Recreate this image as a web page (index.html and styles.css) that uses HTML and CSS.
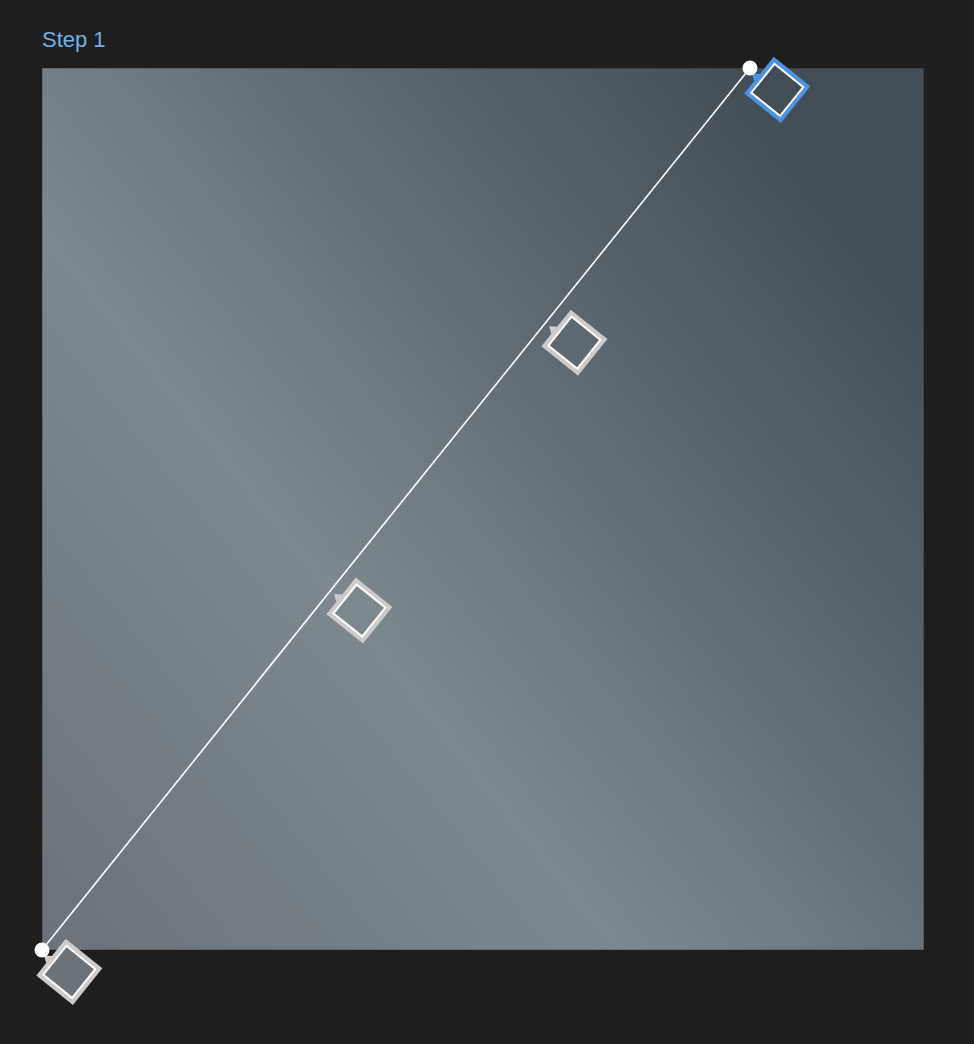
FILE: index.html
```html
<!DOCTYPE html>
<html lang="en">
<head>
<meta charset="utf-8">
<title>Gradient editor</title>
<link rel="stylesheet" href="styles.css">
</head>
<body>
  <main class="editor">
    <h1 class="step-label">Step 1</h1>
    <div class="canvas">
      <svg class="canvas-svg" width="882" height="882" viewBox="0 0 882 882">
        <defs>
          <linearGradient id="fill-gradient" gradientUnits="userSpaceOnUse" x1="0" y1="882" x2="861.4" y2="190.7">
            <stop offset="0" stop-color="#6b7278"/>
            <stop offset="0.4097" stop-color="#7d888e"/>
            <stop offset="0.7134" stop-color="#5e6871"/>
            <stop offset="1" stop-color="#434d56"/>
          </linearGradient>
        </defs>

        <!-- gradient surface -->
        <rect class="surface" x="0" y="0" width="882" height="882" fill="url(#fill-gradient)"/>
        <rect class="surface-edge" x="0.5" y="0.5" width="881" height="881"/>

        <!-- gradient axis -->
        <line class="axis" x1="0" y1="882" x2="708" y2="0"/>

        <!-- colour stops, each rotated to sit square to the axis -->
        <g class="stop" transform="translate(0 882) rotate(-51.25)">
          <path class="stop-pointer" d="M-8 12 L-3 5 L2 12 Z"/>
          <rect class="stop-ring" x="-23.5" y="11.5" width="47" height="47"/>
          <rect class="stop-inner" x="-19.5" y="15.5" width="39" height="39"/>
          <rect x="-17.5" y="17.5" width="35" height="35" fill="#6b7278"/>
        </g>
        <g class="stop" transform="translate(290.1 520.6) rotate(-51.25)">
          <path class="stop-pointer" d="M-8 12 L-3 5 L2 12 Z"/>
          <rect class="stop-ring" x="-23.5" y="11.5" width="47" height="47"/>
          <rect class="stop-inner" x="-19.5" y="15.5" width="39" height="39"/>
          <rect x="-17.5" y="17.5" width="35" height="35" fill="#7d888e"/>
        </g>
        <g class="stop" transform="translate(505.1 252.8) rotate(-51.25)">
          <path class="stop-pointer" d="M-8 12 L-3 5 L2 12 Z"/>
          <rect class="stop-ring" x="-23.5" y="11.5" width="47" height="47"/>
          <rect class="stop-inner" x="-19.5" y="15.5" width="39" height="39"/>
          <rect x="-17.5" y="17.5" width="35" height="35" fill="#5e6871"/>
        </g>
        <g class="stop stop--selected" transform="translate(708 0) rotate(-51.25)">
          <path class="stop-pointer" d="M-8 12 L-3 5 L2 12 Z"/>
          <rect class="stop-ring" x="-23.5" y="11.5" width="47" height="47"/>
          <rect class="stop-inner" x="-19.5" y="15.5" width="39" height="39"/>
          <rect x="-17.5" y="17.5" width="35" height="35" fill="#434d56"/>
        </g>

        <!-- axis end points -->
        <circle class="axis-end" cx="0" cy="882" r="7.5"/>
        <circle class="axis-end" cx="708" cy="0" r="7.5"/>
      </svg>
    </div>
  </main>
</body>
</html>
```

FILE: styles.css
```css
html, body {
  margin: 0;
  padding: 0;
  background: #1e1e1e;
}

body {
  width: 974px;
  height: 1044px;
  overflow: hidden;
  font-family: "Liberation Sans", Arial, sans-serif;
}

.editor {
  display: flex;
  flex-direction: column;
  align-items: flex-start;
  padding: 29px 0 0 42px;
}

.step-label {
  margin: 0;
  font-size: 22px;
  line-height: 22px;
  font-weight: 400;
  color: #6fb1e8;
}

.canvas {
  margin-top: 17px;
  width: 882px;
  height: 882px;
}

.canvas-svg {
  display: block;
  overflow: visible;
}

.surface-edge {
  fill: none;
  stroke: rgba(0, 0, 0, 0.18);
  stroke-width: 1;
}

.axis {
  stroke: #ffffff;
  stroke-width: 1.6;
}

.axis-end {
  fill: #ffffff;
}

.stop-ring,
.stop-pointer {
  fill: #cbcbcb;
}

.stop-inner {
  fill: #ffffff;
}

.stop--selected .stop-ring,
.stop--selected .stop-pointer {
  fill: #4a94e6;
}
```
